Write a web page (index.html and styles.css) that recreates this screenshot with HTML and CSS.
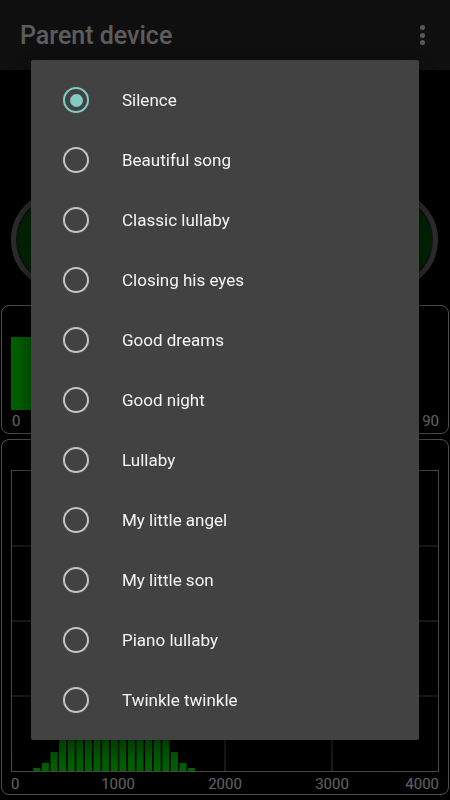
FILE: index.html
```html
<!DOCTYPE html>
<html lang="en">
  <head>
    <meta charset="UTF-8" />
    <meta name="viewport" content="width=device-width, initial-scale=1.0" />
    <title>Parent device</title>
    <link rel="stylesheet" href="styles.css">
  </head>
  <body>
    <header class="toolbar">
      <div class="title">Parent device</div>
      <div class="overflow"><span></span><span></span><span></span></div>
    </header>

    <div class="controls">
      <div class="round-btn"></div>
      <div class="round-btn"></div>
    </div>

    <div class="panel level">
      <div class="level-track">
        <div class="level-bar"></div>
      </div>
      <div class="level-labels">
        <span>0</span>
        <span>90</span>
      </div>
    </div>

    <div class="panel spectrum">
      <svg class="plot" width="428" height="302" viewBox="0 0 428 302">
        <!-- grid -->
        <line class="grid" x1="0" y1="76" x2="428" y2="76" />
        <line class="grid" x1="0" y1="151" x2="428" y2="151" />
        <line class="grid" x1="0" y1="226" x2="428" y2="226" />
        <line class="grid" x1="107" y1="0" x2="107" y2="301" />
        <line class="grid" x1="214" y1="0" x2="214" y2="301" />
        <line class="grid" x1="321" y1="0" x2="321" y2="301" />
        <rect class="frame" x="0.5" y="0.5" width="427" height="301" />
        <!-- bars -->
        <g class="bars">
          <rect x="22.3" y="298" width="7" height="3" />
          <rect x="30.9" y="293" width="7" height="8" />
          <rect x="39.5" y="282" width="7" height="19" />
          <rect x="48.1" y="240" width="7" height="61" />
          <rect x="56.7" y="190" width="7" height="111" />
          <rect x="65.3" y="140" width="7" height="161" />
          <rect x="73.9" y="100" width="7" height="201" />
          <rect x="82.5" y="72" width="7" height="229" />
          <rect x="91.1" y="55" width="7" height="246" />
          <rect x="99.7" y="48" width="7" height="253" />
          <rect x="108.3" y="55" width="7" height="246" />
          <rect x="116.9" y="72" width="7" height="229" />
          <rect x="125.5" y="100" width="7" height="201" />
          <rect x="134.1" y="140" width="7" height="161" />
          <rect x="142.7" y="190" width="7" height="111" />
          <rect x="151.3" y="240" width="7" height="61" />
          <rect x="159.9" y="282" width="7" height="19" />
          <rect x="168.5" y="293" width="7" height="8" />
          <rect x="177.1" y="298" width="7" height="3" />
        </g>
      </svg>
      <div class="axis">
        <span class="tick first">0</span>
        <span class="tick">1000</span>
        <span class="tick">2000</span>
        <span class="tick">3000</span>
        <span class="tick last">4000</span>
      </div>
    </div>

    <div class="scrim">
      <div class="dialog">
        <label class="option checked"><span class="radio"></span>Silence</label>
        <label class="option"><span class="radio"></span>Beautiful song</label>
        <label class="option"><span class="radio"></span>Classic lullaby</label>
        <label class="option"><span class="radio"></span>Closing his eyes</label>
        <label class="option"><span class="radio"></span>Good dreams</label>
        <label class="option"><span class="radio"></span>Good night</label>
        <label class="option"><span class="radio"></span>Lullaby</label>
        <label class="option"><span class="radio"></span>My little angel</label>
        <label class="option"><span class="radio"></span>My little son</label>
        <label class="option"><span class="radio"></span>Piano lullaby</label>
        <label class="option"><span class="radio"></span>Twinkle twinkle</label>
      </div>
    </div>
  </body>
</html>
```

FILE: styles.css
```css
body {
  font-family: Roboto, "Noto Sans", sans-serif;
  margin: 0;
  padding: 0;
  background-color: #000;
  width: 450px;
  height: 800px;
  overflow: hidden;
}
.toolbar {
  height: 70px;
  background-color: #262626;
  display: flex;
  justify-content: space-between;
  align-items: center;
  padding: 0 20px;
  box-sizing: border-box;
}
.title {
  color: #e6e6e6;
  font-size: 25px;
  font-weight: 500;
  margin-top: 1px;
}
.overflow {
  display: flex;
  flex-direction: column;
  gap: 2.5px;
  margin-right: 5px;
}
.overflow span {
  width: 5px;
  height: 5px;
  border-radius: 50%;
  background-color: #e0e0e0;
}
.controls {
  display: flex;
  justify-content: space-between;
  padding: 120px 12px 0 11px;
}
.round-btn {
  width: 100px;
  height: 100px;
  border-radius: 50%;
  box-sizing: border-box;
  border: 5px solid #6e6e6e;
  background: radial-gradient(circle, #006e00 0%, #005a00 70%, #004400 100%);
  box-shadow: inset 0 0 0 2px #2e2e2e;
}
.panel {
  margin: 0 1px;
  border: 1px solid #c0c0c0;
  border-radius: 8px;
}
.level {
  margin-top: 15px;
  height: 129px;
  padding: 31px 9px 0 9px;
  box-sizing: border-box;
}
.level-track {
  height: 73px;
}
.level-bar {
  width: 45%;
  height: 100%;
  background-color: #00f000;
}
.level-labels {
  display: flex;
  justify-content: space-between;
  color: #fff;
  font-size: 15px;
  margin-top: 2px;
  padding: 0 0 0 1px;
}
.spectrum {
  margin-top: 5px;
  height: 356px;
  padding: 30px 8px 0 9px;
  box-sizing: border-box;
}
.plot {
  display: block;
}
.grid {
  stroke: #808080;
  stroke-width: 1;
}
.frame {
  fill: none;
  stroke: #b4b4b4;
  stroke-width: 1;
}
.bars rect {
  fill: #00f000;
}
.axis {
  position: relative;
  height: 24px;
  width: 428px;
  color: #f0f0f0;
  font-size: 15px;
}
.tick {
  position: absolute;
  top: 3px;
  transform: translateX(-50%);
}
.tick:nth-child(2) { left: 107px; }
.tick:nth-child(3) { left: 214px; }
.tick:nth-child(4) { left: 321px; }
.tick.first {
  left: 0;
  transform: none;
}
.tick.last {
  right: 0;
  transform: none;
}
.scrim {
  position: fixed;
  inset: 0;
  background-color: rgba(0, 0, 0, 0.6);
  display: flex;
  justify-content: center;
  align-items: flex-start;
  padding-top: 60px;
}
.dialog {
  width: 388px;
  background-color: #424242;
  border-radius: 2px;
  padding: 10px 0;
  box-shadow: 0 8px 24px rgba(0, 0, 0, 0.5);
}
.option {
  display: flex;
  align-items: center;
  height: 60px;
  padding-left: 32px;
  color: #f4f4f4;
  font-size: 17px;
}
.radio {
  width: 26px;
  height: 26px;
  box-sizing: border-box;
  border: 2.5px solid #c4c4c4;
  border-radius: 50%;
  margin-right: 33px;
  display: flex;
  align-items: center;
  justify-content: center;
}
.option.checked .radio {
  border-color: #80cbc4;
}
.option.checked .radio::after {
  content: "";
  width: 13px;
  height: 13px;
  border-radius: 50%;
  background-color: #80cbc4;
}
```
